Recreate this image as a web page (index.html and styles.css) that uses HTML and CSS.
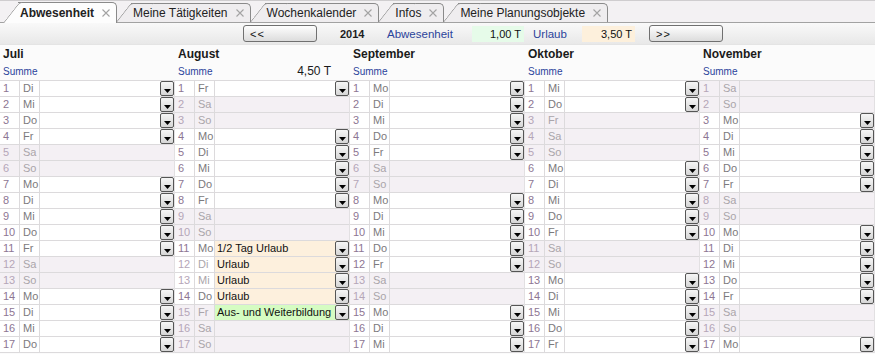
FILE: index.html
```html
<!DOCTYPE html>
<html lang="de">
<head>
    <meta charset="UTF-8">
    <title>Abwesenheit</title>
    <link rel="stylesheet" href="styles.css">
</head>
<body>

<div class="tabbar">
    <div class="tab active">Abwesenheit <svg class="x" viewBox="0 0 8 8"><path d="M0.5 0.5L7.5 7.5M7.5 0.5L0.5 7.5"/></svg></div>
    <div class="tab t2">Meine Tätigkeiten <svg class="x" viewBox="0 0 8 8"><path d="M0.5 0.5L7.5 7.5M7.5 0.5L0.5 7.5"/></svg></div>
    <div class="tab t3">Wochenkalender <svg class="x" viewBox="0 0 8 8"><path d="M0.5 0.5L7.5 7.5M7.5 0.5L0.5 7.5"/></svg></div>
    <div class="tab t4">Infos <svg class="x" viewBox="0 0 8 8"><path d="M0.5 0.5L7.5 7.5M7.5 0.5L0.5 7.5"/></svg></div>
    <div class="tab t5">Meine Planungsobjekte <svg class="x" viewBox="0 0 8 8"><path d="M0.5 0.5L7.5 7.5M7.5 0.5L0.5 7.5"/></svg></div>
</div>

<div class="toolbar">
    <button class="nav">&lt;&lt;</button>
    <span class="year">2014</span>
    <span class="lbl abw">Abwesenheit</span>
    <span class="box green">1,00 T</span>
    <span class="lbl url">Urlaub</span>
    <span class="box orange">3,50 T</span>
    <button class="nav next">&gt;&gt;</button>
</div>

<div class="months">

    <div class="month">
        <div class="mtitle">Juli</div>
        <div class="summe"><span>Summe</span></div>
        <div class="days">
            <div class="day"><span class="n">1</span><span class="d">Di</span><span class="v"><span class="dd"></span></span></div>
            <div class="day"><span class="n">2</span><span class="d">Mi</span><span class="v"><span class="dd"></span></span></div>
            <div class="day"><span class="n">3</span><span class="d">Do</span><span class="v"><span class="dd"></span></span></div>
            <div class="day"><span class="n">4</span><span class="d">Fr</span><span class="v"><span class="dd"></span></span></div>
            <div class="day we"><span class="n">5</span><span class="d">Sa</span><span class="v"></span></div>
            <div class="day we"><span class="n">6</span><span class="d">So</span><span class="v"></span></div>
            <div class="day"><span class="n">7</span><span class="d">Mo</span><span class="v"><span class="dd"></span></span></div>
            <div class="day"><span class="n">8</span><span class="d">Di</span><span class="v"><span class="dd"></span></span></div>
            <div class="day"><span class="n">9</span><span class="d">Mi</span><span class="v"><span class="dd"></span></span></div>
            <div class="day"><span class="n">10</span><span class="d">Do</span><span class="v"><span class="dd"></span></span></div>
            <div class="day"><span class="n">11</span><span class="d">Fr</span><span class="v"><span class="dd"></span></span></div>
            <div class="day we"><span class="n">12</span><span class="d">Sa</span><span class="v"></span></div>
            <div class="day we"><span class="n">13</span><span class="d">So</span><span class="v"></span></div>
            <div class="day"><span class="n">14</span><span class="d">Mo</span><span class="v"><span class="dd"></span></span></div>
            <div class="day"><span class="n">15</span><span class="d">Di</span><span class="v"><span class="dd"></span></span></div>
            <div class="day"><span class="n">16</span><span class="d">Mi</span><span class="v"><span class="dd"></span></span></div>
            <div class="day"><span class="n">17</span><span class="d">Do</span><span class="v"><span class="dd"></span></span></div>
        </div>
    </div>

    <div class="month">
        <div class="mtitle">August</div>
        <div class="summe"><span>Summe</span><span class="sval">4,50 T</span></div>
        <div class="days">
            <div class="day"><span class="n">1</span><span class="d">Fr</span><span class="v"><span class="dd"></span></span></div>
            <div class="day we"><span class="n">2</span><span class="d">Sa</span><span class="v"></span></div>
            <div class="day we"><span class="n">3</span><span class="d">So</span><span class="v"></span></div>
            <div class="day"><span class="n">4</span><span class="d">Mo</span><span class="v"><span class="dd"></span></span></div>
            <div class="day"><span class="n">5</span><span class="d">Di</span><span class="v"><span class="dd"></span></span></div>
            <div class="day"><span class="n">6</span><span class="d">Mi</span><span class="v"><span class="dd"></span></span></div>
            <div class="day"><span class="n">7</span><span class="d">Do</span><span class="v"><span class="dd"></span></span></div>
            <div class="day"><span class="n">8</span><span class="d">Fr</span><span class="v"><span class="dd"></span></span></div>
            <div class="day we"><span class="n">9</span><span class="d">Sa</span><span class="v"></span></div>
            <div class="day we"><span class="n">10</span><span class="d">So</span><span class="v"></span></div>
            <div class="day"><span class="n">11</span><span class="d">Mo</span><span class="v urlaub"><span class="t">1/2 Tag Urlaub</span><span class="dd"></span></span></div>
            <div class="day pale"><span class="n">12</span><span class="d">Di</span><span class="v urlaub"><span class="t">Urlaub</span><span class="dd"></span></span></div>
            <div class="day pale"><span class="n">13</span><span class="d">Mi</span><span class="v urlaub"><span class="t">Urlaub</span><span class="dd"></span></span></div>
            <div class="day"><span class="n">14</span><span class="d">Do</span><span class="v urlaub"><span class="t">Urlaub</span><span class="dd"></span></span></div>
            <div class="day we"><span class="n">15</span><span class="d">Fr</span><span class="v bildung"><span class="t">Aus- und Weiterbildung</span><span class="dd"></span></span></div>
            <div class="day we"><span class="n">16</span><span class="d">Sa</span><span class="v"></span></div>
            <div class="day we"><span class="n">17</span><span class="d">So</span><span class="v"></span></div>
        </div>
    </div>

    <div class="month">
        <div class="mtitle">September</div>
        <div class="summe"><span>Summe</span></div>
        <div class="days">
            <div class="day"><span class="n">1</span><span class="d">Mo</span><span class="v"><span class="dd"></span></span></div>
            <div class="day"><span class="n">2</span><span class="d">Di</span><span class="v"><span class="dd"></span></span></div>
            <div class="day"><span class="n">3</span><span class="d">Mi</span><span class="v"><span class="dd"></span></span></div>
            <div class="day"><span class="n">4</span><span class="d">Do</span><span class="v"><span class="dd"></span></span></div>
            <div class="day"><span class="n">5</span><span class="d">Fr</span><span class="v"><span class="dd"></span></span></div>
            <div class="day we"><span class="n">6</span><span class="d">Sa</span><span class="v"></span></div>
            <div class="day we"><span class="n">7</span><span class="d">So</span><span class="v"></span></div>
            <div class="day"><span class="n">8</span><span class="d">Mo</span><span class="v"><span class="dd"></span></span></div>
            <div class="day"><span class="n">9</span><span class="d">Di</span><span class="v"><span class="dd"></span></span></div>
            <div class="day"><span class="n">10</span><span class="d">Mi</span><span class="v"><span class="dd"></span></span></div>
            <div class="day"><span class="n">11</span><span class="d">Do</span><span class="v"><span class="dd"></span></span></div>
            <div class="day"><span class="n">12</span><span class="d">Fr</span><span class="v"><span class="dd"></span></span></div>
            <div class="day we"><span class="n">13</span><span class="d">Sa</span><span class="v"></span></div>
            <div class="day we"><span class="n">14</span><span class="d">So</span><span class="v"></span></div>
            <div class="day"><span class="n">15</span><span class="d">Mo</span><span class="v"><span class="dd"></span></span></div>
            <div class="day"><span class="n">16</span><span class="d">Di</span><span class="v"><span class="dd"></span></span></div>
            <div class="day"><span class="n">17</span><span class="d">Mi</span><span class="v"><span class="dd"></span></span></div>
        </div>
    </div>

    <div class="month">
        <div class="mtitle">Oktober</div>
        <div class="summe"><span>Summe</span></div>
        <div class="days">
            <div class="day"><span class="n">1</span><span class="d">Mi</span><span class="v"><span class="dd"></span></span></div>
            <div class="day"><span class="n">2</span><span class="d">Do</span><span class="v"><span class="dd"></span></span></div>
            <div class="day we"><span class="n">3</span><span class="d">Fr</span><span class="v"></span></div>
            <div class="day we"><span class="n">4</span><span class="d">Sa</span><span class="v"></span></div>
            <div class="day we"><span class="n">5</span><span class="d">So</span><span class="v"></span></div>
            <div class="day"><span class="n">6</span><span class="d">Mo</span><span class="v"><span class="dd"></span></span></div>
            <div class="day"><span class="n">7</span><span class="d">Di</span><span class="v"><span class="dd"></span></span></div>
            <div class="day"><span class="n">8</span><span class="d">Mi</span><span class="v"><span class="dd"></span></span></div>
            <div class="day"><span class="n">9</span><span class="d">Do</span><span class="v"><span class="dd"></span></span></div>
            <div class="day"><span class="n">10</span><span class="d">Fr</span><span class="v"><span class="dd"></span></span></div>
            <div class="day we"><span class="n">11</span><span class="d">Sa</span><span class="v"></span></div>
            <div class="day we"><span class="n">12</span><span class="d">So</span><span class="v"></span></div>
            <div class="day"><span class="n">13</span><span class="d">Mo</span><span class="v"><span class="dd"></span></span></div>
            <div class="day"><span class="n">14</span><span class="d">Di</span><span class="v"><span class="dd"></span></span></div>
            <div class="day"><span class="n">15</span><span class="d">Mi</span><span class="v"><span class="dd"></span></span></div>
            <div class="day"><span class="n">16</span><span class="d">Do</span><span class="v"><span class="dd"></span></span></div>
            <div class="day"><span class="n">17</span><span class="d">Fr</span><span class="v"><span class="dd"></span></span></div>
        </div>
    </div>

    <div class="month">
        <div class="mtitle">November</div>
        <div class="summe"><span>Summe</span></div>
        <div class="days">
            <div class="day we"><span class="n">1</span><span class="d">Sa</span><span class="v"></span></div>
            <div class="day we"><span class="n">2</span><span class="d">So</span><span class="v"></span></div>
            <div class="day"><span class="n">3</span><span class="d">Mo</span><span class="v"><span class="dd"></span></span></div>
            <div class="day"><span class="n">4</span><span class="d">Di</span><span class="v"><span class="dd"></span></span></div>
            <div class="day"><span class="n">5</span><span class="d">Mi</span><span class="v"><span class="dd"></span></span></div>
            <div class="day"><span class="n">6</span><span class="d">Do</span><span class="v"><span class="dd"></span></span></div>
            <div class="day"><span class="n">7</span><span class="d">Fr</span><span class="v"><span class="dd"></span></span></div>
            <div class="day we"><span class="n">8</span><span class="d">Sa</span><span class="v"></span></div>
            <div class="day we"><span class="n">9</span><span class="d">So</span><span class="v"></span></div>
            <div class="day"><span class="n">10</span><span class="d">Mo</span><span class="v"><span class="dd"></span></span></div>
            <div class="day"><span class="n">11</span><span class="d">Di</span><span class="v"><span class="dd"></span></span></div>
            <div class="day"><span class="n">12</span><span class="d">Mi</span><span class="v"><span class="dd"></span></span></div>
            <div class="day"><span class="n">13</span><span class="d">Do</span><span class="v"><span class="dd"></span></span></div>
            <div class="day"><span class="n">14</span><span class="d">Fr</span><span class="v"><span class="dd"></span></span></div>
            <div class="day we"><span class="n">15</span><span class="d">Sa</span><span class="v"></span></div>
            <div class="day we"><span class="n">16</span><span class="d">So</span><span class="v"></span></div>
            <div class="day"><span class="n">17</span><span class="d">Mo</span><span class="v"><span class="dd"></span></span></div>
        </div>
    </div>

</div>

</body>
</html>
```

FILE: styles.css
```css
body {
    margin: 0;
    width: 875px;
    height: 354px;
    overflow: hidden;
    font-family: "Liberation Sans", Arial, sans-serif;
    font-size: 11px;
    color: #1e1e1e;
    background: #fbfbfb;
}

/* Tabs */
.tabbar {
    height: 19px;
    padding: 2px 0 0 18px;
    display: flex;
    align-items: flex-end;
    background: #f3f1f3;
    border-top: 1px solid #cfcdcf;
    border-bottom: 1px solid #a2a2a2;
}

.tab {
    position: relative;
    z-index: 5;
    display: flex;
    align-items: center;
    gap: 8px;
    height: 18px;
    padding: 0 6px 0 2px;
    margin-right: 14px;
    background: #efedef;
    border: 1px solid #8a8a8a;
    border-left: none;
    border-bottom: none;
    border-top-right-radius: 5px;
    font-size: 12px;
    color: #222;
    white-space: nowrap;
}

.tab::before {
    content: "";
    position: absolute;
    left: -15px;
    top: -1px;
    bottom: 0;
    width: 22px;
    background: inherit;
    border-left: 1px solid #8a8a8a;
    border-top: 1px solid #8a8a8a;
    border-top-left-radius: 3px;
    transform: skewX(-38deg);
    transform-origin: bottom left;
    z-index: -1;
}

.tab.active {
    z-index: 10;
    height: 19px;
    margin-bottom: -1px;
    padding-bottom: 1px;
    box-sizing: content-box;
    background: #fdfdfd;
    font-weight: bold;
}

.tab.active .x {
    margin-top: 1px;
}

.t2 { z-index: 4; }
.t3 { z-index: 3; }
.t4 { z-index: 2; }
.t5 { z-index: 1; }

.x {
    width: 8px;
    height: 8px;
    fill: none;
    stroke: #a3a3a3;
    stroke-width: 1.1;
}

/* Toolbar */
.toolbar {
    height: 21px;
    display: flex;
    align-items: center;
    padding-left: 243px;
    background: linear-gradient(#f9f9f9, #e8e8e8);
    border-bottom: 1px solid #e4e4e4;
}

.nav {
    width: 74px;
    height: 17px;
    margin: 0;
    padding: 0 0 0 6px;
    box-sizing: border-box;
    text-align: left;
    font-family: "Liberation Sans", Arial, sans-serif;
    font-size: 11px;
    letter-spacing: 1px;
    color: #111;
    border: 1px solid #707070;
    border-radius: 3px;
    background: linear-gradient(#fefefe, #dcdcdc);
}

.next {
    margin-left: 14px;
}

.year {
    width: 25px;
    margin-left: 23px;
    font-weight: bold;
}

.lbl {
    color: #2b449b;
    font-size: 11.5px;
    white-space: nowrap;
}

.abw {
    width: 65px;
    margin-left: 22px;
}

.url {
    width: 30px;
    margin-left: 9px;
}

.box {
    height: 16px;
    line-height: 16px;
    padding-right: 3px;
    box-sizing: border-box;
    text-align: right;
    font-size: 11px;
    color: #111;
}

.green {
    width: 52px;
    margin-left: 20px;
    background: #e6fbe9;
}

.orange {
    width: 53px;
    margin-left: 19px;
    background: #fdf0dc;
}

/* Month columns */
.months {
    display: flex;
}

.month {
    width: 175px;
}

.mtitle {
    height: 18px;
    line-height: 18px;
    padding-left: 3px;
    font-size: 12px;
    font-weight: bold;
    color: #1a1a1a;
}

.summe {
    height: 17px;
    line-height: 17px;
    display: flex;
    padding: 0 19px 0 3px;
    font-size: 10px;
    color: #2b449b;
}

.sval {
    margin-left: auto;
    font-size: 12px;
    color: #1a1a1a;
}

.days {
    border-top: 1px solid #dcdadc;
    border-right: 1px solid #e2e0e2;
}

.day {
    display: flex;
    height: 15px;
    line-height: 15px;
    border-bottom: 1px solid #dcdadc;
    background: #fff;
}

.n {
    width: 20px;
    padding-left: 3px;
    box-sizing: border-box;
    border-right: 1px solid #dcdadc;
    color: #8d7693;
}

.d {
    width: 20px;
    padding-left: 3px;
    box-sizing: border-box;
    border-right: 1px solid #dcdadc;
    color: #7c7a7c;
}

.v {
    flex: 1;
    display: flex;
    justify-content: flex-end;
}

.t {
    flex: 1;
    padding-left: 2px;
    color: #111;
    white-space: nowrap;
    overflow: hidden;
}

.urlaub { background: #fdf0dd; }
.bildung { background: #d5fcc2; }

.we {
    background: #f4f0f4;
}

.we .n,
.pale .n {
    color: #b5a6b8;
}

.we .d,
.pale .d {
    color: #aaa5aa;
}

/* dropdown button */
.dd {
    position: relative;
    width: 14px;
    height: 15px;
    box-sizing: border-box;
    border: 1px solid #555;
    border-radius: 2px;
    background: linear-gradient(#f6f6f6, #d6d6d6);
}

.dd::after {
    content: "";
    position: absolute;
    left: 3px;
    top: 7px;
    width: 7px;
    height: 4px;
    background: #000;
    clip-path: polygon(0 0, 100% 0, 50% 100%);
}
```
